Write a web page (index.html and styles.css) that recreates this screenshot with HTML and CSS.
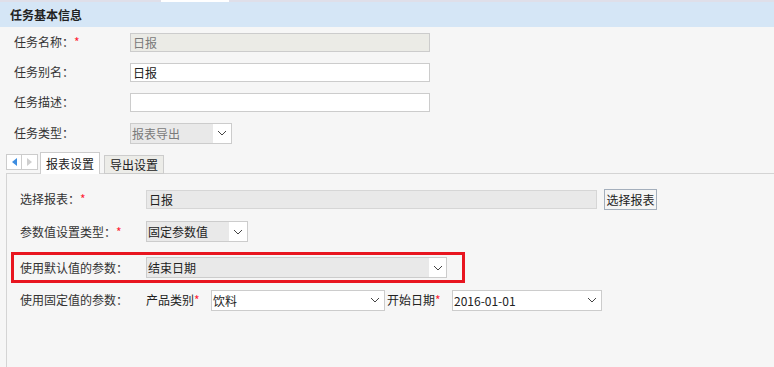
FILE: index.html
```html
<!DOCTYPE html>
<html lang="zh-CN">
<head>
    <meta charset="UTF-8">
    <title>任务基本信息</title>
    <link rel="stylesheet" href="styles.css">
</head>
<body>
    <div class="topstrip"><span class="topstrip-gap"></span><span class="topstrip-tab"></span></div>
    <div class="section-head">任务基本信息</div>

    <div class="basic">
        <div class="row">
            <span class="lbl">任务名称：<em>*</em></span>
            <div class="field field-wide field-off">日报</div>
        </div>
        <div class="row">
            <span class="lbl">任务别名：</span>
            <div class="field field-wide">日报</div>
        </div>
        <div class="row">
            <span class="lbl">任务描述：</span>
            <div class="field field-wide"></div>
        </div>
        <div class="row row-last">
            <span class="lbl">任务类型：</span>
            <div class="select select-type select-off">
                <span class="select-value">报表导出</span>
                <span class="select-arrow"><svg width="10" height="6" viewBox="0 0 10 6"><polyline points="1,1 5,5 9,1" fill="none" stroke="#444" stroke-width="1"/></svg></span>
            </div>
        </div>
    </div>

    <div class="tabs">
        <div class="tab-nav">
            <span class="tab-nav-btn"><svg width="5" height="8" viewBox="0 0 5 8"><polygon points="5,0 0,4 5,8" fill="#3d8de0"/></svg></span>
            <span class="tab-nav-btn"><svg width="5" height="8" viewBox="0 0 5 8"><polygon points="0,0 5,4 0,8" fill="#cfcfcf"/></svg></span>
        </div>
        <div class="tab tab-active">报表设置</div>
        <div class="tab">导出设置</div>
    </div>

    <div class="panel">
        <div class="prow prow-a">
            <span class="plbl">选择报表：<em>*</em></span>
            <div class="field field-report">日报</div>
            <button class="btn">选择报表</button>
        </div>
        <div class="prow prow-b">
            <span class="plbl">参数值设置类型：<em>*</em></span>
            <div class="select select-type select-off">
                <span class="select-value select-value-dark">固定参数值</span>
                <span class="select-arrow"><svg width="10" height="6" viewBox="0 0 10 6"><polyline points="1,1 5,5 9,1" fill="none" stroke="#444" stroke-width="1"/></svg></span>
            </div>
        </div>
        <div class="prow prow-mark">
            <span class="plbl">使用默认值的参数：</span>
            <div class="select select-default select-off">
                <span class="select-value select-value-dark">结束日期</span>
                <span class="select-arrow arrow-narrow"><svg width="10" height="6" viewBox="0 0 10 6"><polyline points="1,1 5,5 9,1" fill="none" stroke="#444" stroke-width="1"/></svg></span>
            </div>
        </div>
        <div class="prow prow-d">
            <span class="plbl">使用固定值的参数：</span>
            <span class="sublbl">产品类别<em>*</em></span>
            <div class="select select-product">
                <span class="select-value select-value-dark">饮料</span>
                <span class="select-arrow"><svg width="10" height="6" viewBox="0 0 10 6"><polyline points="1,1 5,5 9,1" fill="none" stroke="#444" stroke-width="1"/></svg></span>
            </div>
            <span class="sublbl sublbl-date">开始日期<em>*</em></span>
            <div class="select select-date">
                <span class="select-value select-value-dark">2016-01-01</span>
                <span class="select-arrow"><svg width="10" height="6" viewBox="0 0 10 6"><polyline points="1,1 5,5 9,1" fill="none" stroke="#444" stroke-width="1"/></svg></span>
            </div>
        </div>
    </div>
</body>
</html>
```

FILE: styles.css
```css
* {
    margin: 0;
    padding: 0;
    box-sizing: border-box;
}

body {
    font-family: "Noto Sans CJK SC", "Liberation Sans", sans-serif;
    font-size: 12px;
    line-height: 16px;
    color: #333;
    background: #f6f6f6;
    overflow: hidden;
}

em {
    font-style: normal;
    color: #f23;
}

/* strip above the header */
.topstrip {
    display: flex;
    height: 2px;
    background: #dfdfe9;
}

.topstrip-gap {
    width: 161px;
}

.topstrip-tab {
    width: 68px;
    background: #fff;
}

.section-head {
    height: 25px;
    line-height: 25px;
    padding-left: 10px;
    background: #d5e6f6;
    font-weight: bold;
    color: #222;
}

/* basic info rows */
.basic {
    padding-left: 14px;
}

.row {
    display: flex;
    align-items: center;
    height: 30px;
}

.row-last {
    height: 32px;
}

.lbl {
    width: 116px;
}

.field {
    height: 19px;
    line-height: 17px;
    padding-left: 2px;
    border: 1px solid #ccc;
    background: #fff;
    color: #222;
}

.field-wide {
    width: 300px;
}

.field-off {
    background: #ebebe6;
    color: #7a7a7a;
}

.field-report {
    width: 451px;
    background: #e9e9e9;
    border-color: #d6d6d6;
    color: #222;
}

/* select boxes */
.select {
    display: flex;
    height: 21px;
    border: 1px solid #ccc;
    background: #fff;
}

.select-off {
    background: #e9e9e9;
}

.select-value {
    flex: 1;
    line-height: 19px;
    padding-left: 1px;
    color: #7a7a7a;
    white-space: nowrap;
}

.select-value-dark {
    color: #222;
}

.select-arrow {
    display: flex;
    align-items: center;
    justify-content: center;
    width: 18px;
    background: #fff;
}

.arrow-narrow {
    width: 17px;
}

.select-type {
    width: 102px;
}

.select-default {
    width: 301px;
}

.select-product {
    width: 174px;
}

.select-date {
    width: 150px;
}

/* tab strip */
.tabs {
    display: flex;
    align-items: flex-end;
    height: 22px;
    margin-top: 3px;
    padding-left: 6px;
}

.tab-nav {
    display: flex;
    align-self: flex-start;
    margin-top: 2px;
    margin-right: 2px;
}

.tab-nav-btn {
    display: flex;
    align-items: center;
    justify-content: center;
    width: 16px;
    height: 16px;
    border: 1px solid #ccc;
    background: #fff;
}

.tab-nav-btn + .tab-nav-btn {
    border-left: none;
}

.tab {
    width: 60px;
    height: 19px;
    line-height: 17px;
    margin-left: 4px;
    text-align: center;
    border: 1px solid #ccc;
    background: #ecece8;
    color: #222;
}

.tab-active {
    position: relative;
    z-index: 1;
    height: 22px;
    line-height: 21px;
    margin-left: 0;
    border-bottom: none;
    background: #fff;
}

/* settings panel */
.panel {
    margin-top: -1px;
    margin-left: 6px;
    height: 200px;
    padding-top: 9px;
    border-top: 1px solid #d4d4d4;
    border-left: 1px solid #d4d4d4;
}

.prow {
    display: flex;
    align-items: center;
    padding-left: 13px;
}

.plbl {
    width: 126px;
    white-space: nowrap;
}

.prow-a {
    height: 32px;
}

.prow-b {
    height: 33px;
}

.prow-mark {
    width: 454px;
    height: 31px;
    margin-top: 4px;
    margin-left: 4px;
    padding-left: 6px;
    border: 3px solid #e8151f;
}

.prow-d {
    height: 34px;
}

.btn {
    width: 53px;
    height: 21px;
    margin-left: 7px;
    font-family: inherit;
    font-size: 12px;
    line-height: 17px;
    color: #222;
    border: 1px solid #a4afbc;
    background: #f5f5f5;
}

.sublbl {
    width: 65px;
    white-space: nowrap;
    color: #222;
}

.sublbl-date {
    width: 65px;
    margin-left: 2px;
}
```
